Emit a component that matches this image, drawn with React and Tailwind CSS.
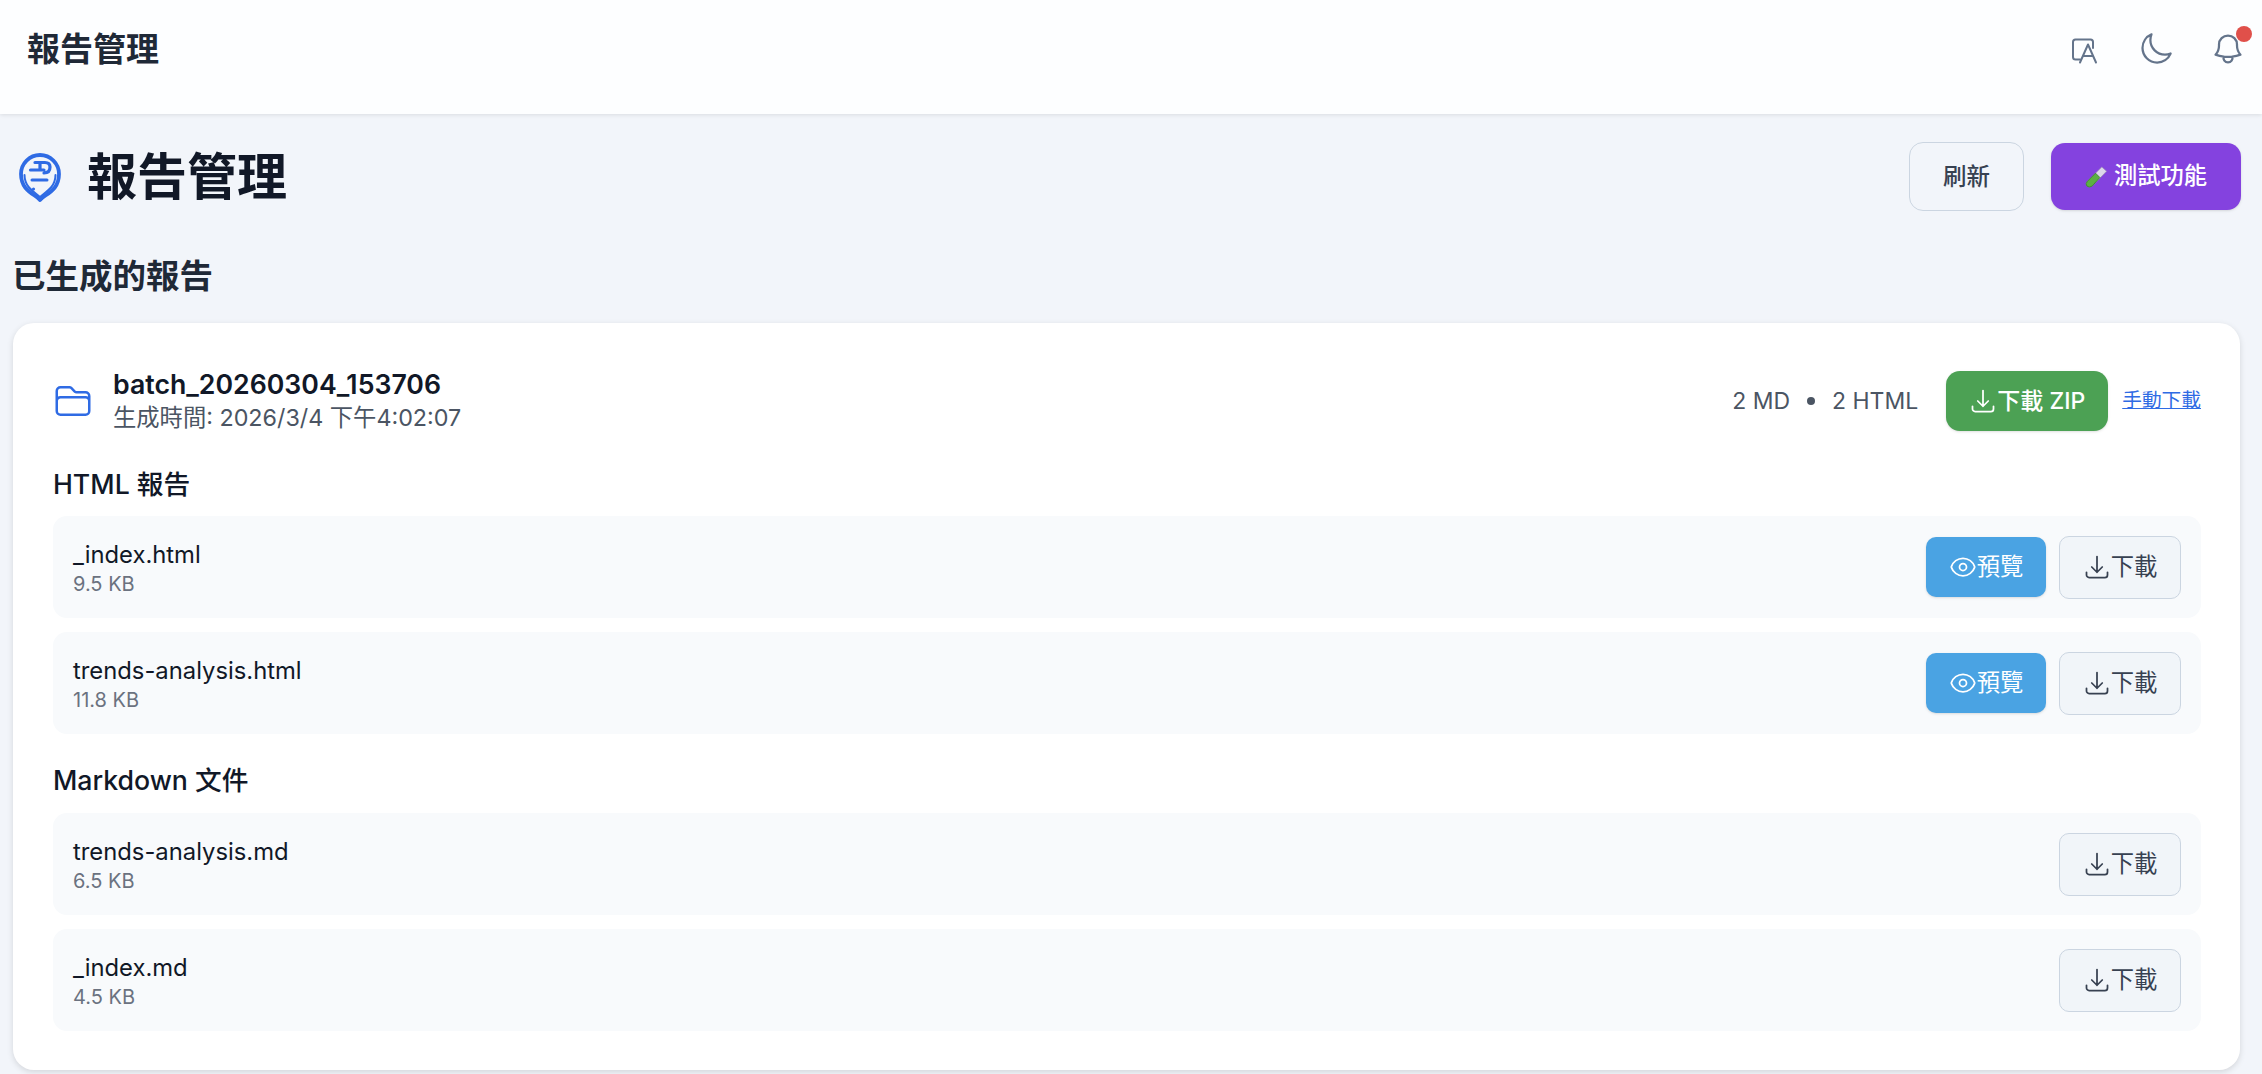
const P = {
  tray: "M3 16.5v2.25A2.25 2.25 0 005.25 21h13.5A2.25 2.25 0 0021 18.75V16.5M16.5 12L12 16.5m0 0L7.5 12m4.5 4.5V3",
  eye1: "M2.036 12.322a1.012 1.012 0 010-.639C3.423 7.51 7.36 4.5 12 4.5c4.638 0 8.573 3.007 9.963 7.178.07.207.07.431 0 .639C20.577 16.49 16.64 19.5 12 19.5c-4.638 0-8.573-3.007-9.963-7.178z",
  eye2: "M15 12a3 3 0 11-6 0 3 3 0 016 0z",
  moon: "M21.752 15.002A9.718 9.718 0 0118 15.75c-5.385 0-9.75-4.365-9.75-9.75 0-1.33.266-2.597.748-3.752A9.753 9.753 0 003 11.25C3 16.635 7.365 21 12.75 21a9.753 9.753 0 009.002-5.998z",
  bell: "M14.857 17.082a23.848 23.848 0 005.454-1.31A8.967 8.967 0 0118 9.75v-.7V9A6 6 0 006 9v.75a8.967 8.967 0 01-2.312 6.022c1.733.64 3.56 1.085 5.455 1.31m5.714 0a24.255 24.255 0 01-5.714 0m5.714 0a3 3 0 11-5.714 0",
  folder: "M2.25 12.75V12A2.25 2.25 0 014.5 9.75h15A2.25 2.25 0 0121.75 12v.75m-8.69-6.44l-2.12-2.12a1.5 1.5 0 00-1.061-.44H4.5A2.25 2.25 0 002.25 6v12a2.25 2.25 0 002.25 2.25h15A2.25 2.25 0 0021.75 18V9a2.25 2.25 0 00-2.25-2.25h-5.379a1.5 1.5 0 01-1.06-.44z",
};

function Icon({ d, className, sw = 1.5 }) {
  return (
    <svg viewBox="0 0 24 24" fill="none" stroke="currentColor" strokeWidth={sw} strokeLinecap="round" strokeLinejoin="round" className={className}>
      {d.map((p) => <path key={p} d={p} />)}
    </svg>
  );
}

function Logo() {
  return (
    <svg viewBox="0 0 52 54" fill="none" stroke="#2f6be4" strokeLinecap="round" strokeLinejoin="round" className="w-[52px] h-[54px] shrink-0">
      <path d="M26 50 C 21 44 7 41 7 24 A19 19 0 0 1 45 24 C 45 41 31 44 26 50 Z" strokeWidth="3.8" />
      <path d="M10.5 25 C 10.5 37 20 42 26 47 M41.5 25 C 41.5 37 32 42 26 47" strokeWidth="2" />
      <path d="M16.5 20 H30 M21 12.5 H31 Q36 12.5 36 17 Q36 23 30 23 M26 12.5 V20" strokeWidth="3.2" />
      <path d="M18 30 H33" strokeWidth="3" />
      <circle cx="19.5" cy="39" r="1.6" fill="#2f6be4" stroke="none" />
    </svg>
  );
}

function TestTube() {
  return (
    <svg viewBox="0 0 24 24" className="w-[23px] h-[24px] shrink-0">
      <path d="M17.5 1.5 L22.5 6 L7.5 21.5 Q4.5 23.5 2 21.5 Q0 19 2.5 16.5 Z" fill="#dcd6ea" stroke="#9c8db8" strokeWidth="0.8" />
      <path d="M11 8 L15.5 12.5 L7.5 21.5 Q4.5 23.5 2 21.5 Q0 19 2.5 16.5 Z" fill="#5cb043" stroke="#2f7a2a" strokeWidth="0.8" />
    </svg>
  );
}

function Row({ name, size, preview }) {
  return (
    <div className="flex items-center justify-between h-[102px] px-[20px] rounded-[14px] bg-[#f8fafc]">
      <div className="pt-[2px]">
        <div className="text-[23.8px] leading-[32px] text-[#111827]">{name}</div>
        <div className="text-[20px] leading-[26px] text-[#6b7280]">{size}</div>
      </div>
      <div className="flex items-center gap-[13px]">
        {preview && (
          <button className="flex items-center justify-center gap-0 w-[120px] h-[60px] rounded-[10px] bg-[#4aa3e3] text-white text-[23.3px] shadow-sm">
            <Icon d={[P.eye1, P.eye2]} className="w-[28px] h-[28px]" />預覽
          </button>
        )}
        <button className="flex items-center justify-center gap-0 w-[122px] h-[63px] rounded-[10px] border border-[#cbd5e1] bg-[#f1f5f9] text-[#374151] text-[23.3px]">
          <Icon d={[P.tray]} className="w-[28px] h-[28px]" />下載
        </button>
      </div>
    </div>
  );
}

export default function App() {
  return (
    <div
      className="w-[2262px] h-[1074px] overflow-hidden flex flex-col bg-[#f2f5fa]"
      style={{ fontFamily: 'Inter, "Noto Sans CJK TC", sans-serif' }}
    >
      <header className="h-[114px] shrink-0 bg-[#fdfeff] shadow-[0_1px_4px_rgba(0,0,0,0.1)] flex items-center justify-between pl-[27px] pr-[16px] relative">
        <div className="text-[33px] font-semibold text-[#1f2937] leading-none -mt-[16px]">報告管理</div>
        <div className="flex items-center gap-[36px] -mt-[17px] text-[#64748b]">
          <svg viewBox="0 0 36 36" fill="none" stroke="currentColor" strokeWidth="2" strokeLinecap="round" strokeLinejoin="round" className="w-[36px] h-[36px]">
            <path d="M14 28.5 H9.5 Q7 28.5 7 26 V11 Q7 8.5 9.5 8.5 H24.5 Q27 8.5 27 11 V17" />
            <path d="M14 31.5 L22 13.5 L30 31.5 M17 25 H27" />
          </svg>
          <Icon d={[P.moon]} className="w-[36px] h-[36px]" />
          <div className="relative w-[36px] h-[36px]">
            <Icon d={[P.bell]} className="w-[36px] h-[36px]" />
            <span className="absolute -top-[5px] left-[26px] w-[16px] h-[16px] rounded-full bg-[#e0504a]" />
          </div>
        </div>
      </header>

      <main className="flex-1 pl-[13px] pr-[22px] flex flex-col">
        <div className="flex items-center justify-between h-[69px] mt-[28px]">
          <div className="flex items-center gap-[21px] pl-[1px]">
            <Logo />
            <h1 className="text-[50px] font-bold text-[#111827] leading-none">報告管理</h1>
          </div>
          <div className="flex items-center gap-[27px] -mr-[1px]">
            <button className="w-[115px] h-[69px] rounded-[14px] border border-[#cbd5e1] text-[#374151] text-[23.5px] font-medium">刷新</button>
            <button className="w-[190px] h-[67px] rounded-[14px] bg-[#8442df] text-white text-[23.3px] font-medium flex items-center justify-center gap-[6px] shadow-sm">
              <TestTube />測試功能
            </button>
          </div>
        </div>

        <h2 className="mt-[41px] text-[33.5px] leading-[48px] font-semibold text-[#1f2937] -ml-[1px]">已生成的報告</h2>

        <section className="mt-[23px] h-[747px] rounded-[21px] bg-white shadow-[0_2px_6px_rgba(0,0,0,0.13)] pl-[40px] pr-[39px] pt-[44px]">
          <div className="flex items-center justify-between h-[68px]">
            <div className="flex items-center gap-[20px]">
              <Icon d={[P.folder]} className="w-[40px] h-[40px] text-[#2f6be4] shrink-0" />
              <div>
                <div className="text-[26.7px] leading-[34px] font-semibold text-[#111827]">batch_20260304_153706</div>
                <div className="text-[23.3px] leading-[34px] text-[#4b5563]">生成時間: 2026/3/4 下午4:02:07</div>
              </div>
            </div>
            <div className="flex items-center">
              <span className="text-[23px] text-[#4b5563]">2 MD</span>
              <span className="mx-[17px] w-[8px] h-[8px] rounded-full bg-[#4b5563]" />
              <span className="text-[23px] text-[#4b5563]">2 HTML</span>
              <button className="ml-[28px] w-[162px] h-[60px] rounded-[14px] bg-[#4ca154] text-white text-[23px] font-medium flex items-center justify-center gap-0 shadow-sm">
                <Icon d={[P.tray]} className="w-[28px] h-[28px]" />下載 ZIP
              </button>
              <a className="ml-[14px] text-[19.7px] text-[#2f6be4] underline">手動下載</a>
            </div>
          </div>

          <h3 className="mt-[31px] text-[26.7px] leading-[36px] font-medium text-[#111827]">HTML 報告</h3>
          <div className="mt-[14px] flex flex-col gap-[14px]">
            <Row name="_index.html" size="9.5 KB" preview />
            <Row name="trends-analysis.html" size="11.8 KB" preview />
          </div>

          <h3 className="mt-[28px] text-[26.7px] leading-[36px] font-medium text-[#111827]">Markdown 文件</h3>
          <div className="mt-[15px] flex flex-col gap-[14px]">
            <Row name="trends-analysis.md" size="6.5 KB" />
            <Row name="_index.md" size="4.5 KB" />
          </div>
        </section>
      </main>
    </div>
  );
}
